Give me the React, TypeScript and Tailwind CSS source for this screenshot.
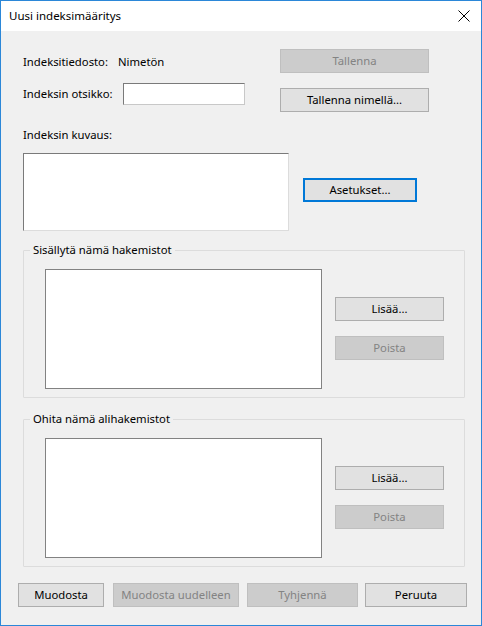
import React from "react";

const font = { fontFamily: '"Segoe UI", "Noto Sans", "Open Sans", sans-serif' };

function Btn({
  label,
  w,
  disabled,
  focused,
}: {
  label: string;
  w: string;
  disabled?: boolean;
  focused?: boolean;
}) {
  const base = "h-[24px] flex items-center justify-center text-[11.3px] leading-none box-border";
  const look = disabled
    ? "bg-[#cccccc] border border-[#bfbfbf] text-[#838383]"
    : focused
      ? "bg-[#e1e1e1] border-2 border-[#0078d7] text-black"
      : "bg-[#e1e1e1] border border-[#adadad] text-black";
  return <div className={`${base} ${look} ${w}`}>{label}</div>;
}

function Group({ title, className }: { title: string; className: string }) {
  return (
    <div className={`relative ml-[22px] w-[442px] h-[148px] border border-[#dcdcdc] rounded-[1px] ${className}`}>
      <span className="absolute -top-[9px] left-[6px] px-[3px] bg-[#f0f0f0] text-[11.3px] leading-[16px] text-black">
        {title}
      </span>
      <div className="flex items-start pt-[18px] pl-[21px]">
        <div className="w-[277px] h-[120px] bg-white border border-[#828282]" />
        <div className="ml-[13px] mt-[28px] flex flex-col gap-[15px]">
          <Btn label="Lisää..." w="w-[109px]" />
          <Btn label="Poista" w="w-[109px]" disabled />
        </div>
      </div>
    </div>
  );
}

export default function App() {
  return (
    <div className="w-[482px] h-[626px] border border-[#2b87d8] bg-[#f0f0f0] flex flex-col" style={font}>
      {/* Title bar */}
      <div className="h-[30px] bg-white flex items-center justify-between pl-[8px] pr-[10px] shrink-0">
        <span className="text-[11.5px] text-black">Uusi indeksimääritys</span>
        <svg width="12" height="12" viewBox="0 0 12 12" className="mr-[1px]">
          <path d="M0.5 0.5 L11.5 11.5 M11.5 0.5 L0.5 11.5" stroke="#000" strokeWidth="1" />
        </svg>
      </div>

      {/* Top area */}
      <div className="flex pl-[22px] pt-[18px]">
        <div className="w-[257px] flex flex-col">
          <div className="flex items-center h-[24px] pt-[2px] text-[11.3px] text-black">
            <span className="w-[95px]">Indeksitiedosto:</span>
            <span>Nimetön</span>
          </div>
          <div className="flex items-center mt-[10px] h-[22px] text-[11.3px] text-black">
            <span className="w-[100px]">Indeksin otsikko:</span>
            <div className="w-[122px] h-[22px] bg-white border border-[#7a7a7a] border-b-[#c8c8c8] border-r-[#c8c8c8]" />
          </div>
          <div className="mt-[22px] text-[11.3px] text-black leading-[16px]">Indeksin kuvaus:</div>
        </div>
        <div className="flex flex-col">
          <Btn label="Tallenna" w="w-[149px]" disabled />
          <div className="mt-[15px]">
            <Btn label="Tallenna nimellä..." w="w-[149px]" />
          </div>
        </div>
      </div>

      <div className="flex items-center pl-[22px] mt-[10px]">
        <div className="w-[266px] h-[78px] bg-white border border-[#7a7a7a] border-b-[#dcdcdc] border-r-[#dcdcdc]" />
        <div className="ml-[14px] mt-[-5px]">
          <Btn label="Asetukset..." w="w-[114px]" focused />
        </div>
      </div>

      <Group title="Sisällytä nämä hakemistot" className="mt-[19px]" />
      <Group title="Ohita nämä alihakemistot" className="mt-[21px]" />

      {/* Bottom buttons */}
      <div className="flex pl-[17px] mt-[16px]">
        <Btn label="Muodosta" w="w-[86px]" />
        <div className="ml-[9px]">
          <Btn label="Muodosta uudelleen" w="w-[126px]" disabled />
        </div>
        <div className="ml-[8px]">
          <Btn label="Tyhjennä" w="w-[111px]" disabled />
        </div>
        <div className="ml-[7px]">
          <Btn label="Peruuta" w="w-[102px]" />
        </div>
      </div>
    </div>
  );
}
